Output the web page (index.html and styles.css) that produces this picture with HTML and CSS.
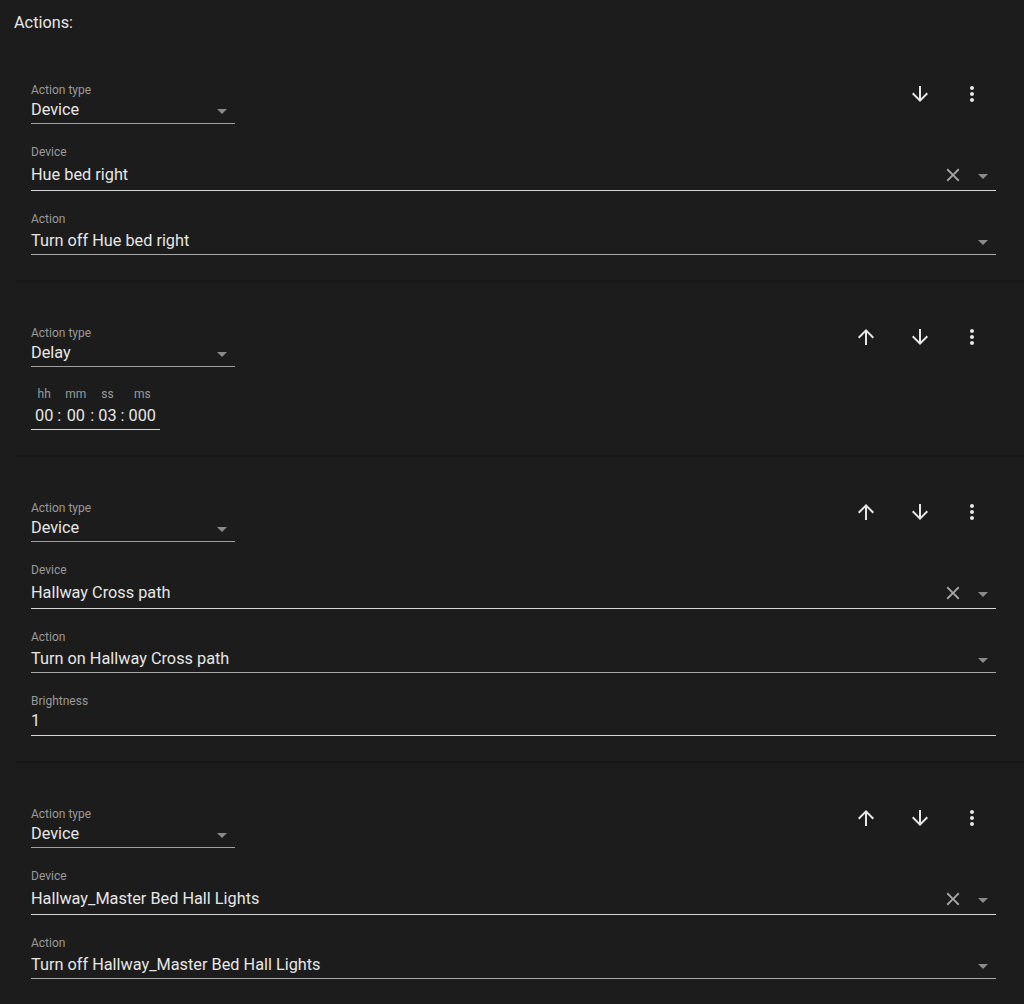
FILE: index.html
```html
<!DOCTYPE html>
<html lang="en">
<head>
    <meta charset="UTF-8">
    <meta name="viewport" content="width=device-width, initial-scale=1.0">
    <title>Automation Actions</title>
    <link rel="stylesheet" href="styles.css">
</head>
<body>
    <div class="title">Actions:</div>

    <!-- action 1 -->
    <div class="card">
        <div class="card-head">
            <div class="field select small">
                <div class="label">Action type</div>
                <div class="value"><span>Device</span><span class="caret"></span></div>
            </div>
            <div class="tools">
                <span class="icon-btn"><svg viewBox="0 0 24 24"><path d="M20 12l-1.41-1.41L13 16.17V4h-2v12.17l-5.58-5.59L4 12l8 8 8-8z"/></svg></span>
                <span class="icon-btn"><svg viewBox="0 0 24 24"><path d="M12 8c1.1 0 2-.9 2-2s-.9-2-2-2-2 .9-2 2 .9 2 2 2zm0 2c-1.1 0-2 .9-2 2s.9 2 2 2 2-.9 2-2-.9-2-2-2zm0 6c-1.1 0-2 .9-2 2s.9 2 2 2 2-.9 2-2-.9-2-2-2z"/></svg></span>
            </div>
        </div>
        <div class="field combo">
            <div class="label">Device</div>
            <div class="value"><span>Hue bed right</span><svg class="clear" viewBox="0 0 24 24"><path d="M19 6.41L17.59 5 12 10.59 6.41 5 5 6.41 10.59 12 5 17.59 6.41 19 12 13.41 17.59 19 19 17.59 13.41 12z"/></svg><span class="caret"></span></div>
        </div>
        <div class="field select wide">
            <div class="label">Action</div>
            <div class="value"><span>Turn off Hue bed right</span><span class="caret"></span></div>
        </div>
    </div>

    <!-- action 2 -->
    <div class="card">
        <div class="card-head">
            <div class="field select small">
                <div class="label">Action type</div>
                <div class="value"><span>Delay</span><span class="caret"></span></div>
            </div>
            <div class="tools">
                <span class="icon-btn up"><svg viewBox="0 0 24 24"><path d="M4 12l1.41 1.41L11 7.83V20h2V7.83l5.58 5.59L20 12l-8-8-8 8z"/></svg></span>
                <span class="icon-btn"><svg viewBox="0 0 24 24"><path d="M20 12l-1.41-1.41L13 16.17V4h-2v12.17l-5.58-5.59L4 12l8 8 8-8z"/></svg></span>
                <span class="icon-btn"><svg viewBox="0 0 24 24"><path d="M12 8c1.1 0 2-.9 2-2s-.9-2-2-2-2 .9-2 2 .9 2 2 2zm0 2c-1.1 0-2 .9-2 2s.9 2 2 2 2-.9 2-2-.9-2-2-2zm0 6c-1.1 0-2 .9-2 2s.9 2 2 2 2-.9 2-2-.9-2-2-2z"/></svg></span>
            </div>
        </div>
        <div class="duration">
            <div class="unit"><div class="label">hh</div><div class="num">00</div></div>
            <div class="sep">:</div>
            <div class="unit"><div class="label">mm</div><div class="num">00</div></div>
            <div class="sep">:</div>
            <div class="unit"><div class="label">ss</div><div class="num">03</div></div>
            <div class="sep">:</div>
            <div class="unit"><div class="label">ms</div><div class="num">000</div></div>
        </div>
    </div>

    <!-- action 3 -->
    <div class="card">
        <div class="card-head">
            <div class="field select small">
                <div class="label">Action type</div>
                <div class="value"><span>Device</span><span class="caret"></span></div>
            </div>
            <div class="tools">
                <span class="icon-btn up"><svg viewBox="0 0 24 24"><path d="M4 12l1.41 1.41L11 7.83V20h2V7.83l5.58 5.59L20 12l-8-8-8 8z"/></svg></span>
                <span class="icon-btn"><svg viewBox="0 0 24 24"><path d="M20 12l-1.41-1.41L13 16.17V4h-2v12.17l-5.58-5.59L4 12l8 8 8-8z"/></svg></span>
                <span class="icon-btn"><svg viewBox="0 0 24 24"><path d="M12 8c1.1 0 2-.9 2-2s-.9-2-2-2-2 .9-2 2 .9 2 2 2zm0 2c-1.1 0-2 .9-2 2s.9 2 2 2 2-.9 2-2-.9-2-2-2zm0 6c-1.1 0-2 .9-2 2s.9 2 2 2 2-.9 2-2-.9-2-2-2z"/></svg></span>
            </div>
        </div>
        <div class="field combo">
            <div class="label">Device</div>
            <div class="value"><span>Hallway Cross path</span><svg class="clear" viewBox="0 0 24 24"><path d="M19 6.41L17.59 5 12 10.59 6.41 5 5 6.41 10.59 12 5 17.59 6.41 19 12 13.41 17.59 19 19 17.59 13.41 12z"/></svg><span class="caret"></span></div>
        </div>
        <div class="field select wide">
            <div class="label">Action</div>
            <div class="value"><span>Turn on Hallway Cross path</span><span class="caret"></span></div>
        </div>
        <div class="field text">
            <div class="label">Brightness</div>
            <div class="value"><span>1</span></div>
        </div>
    </div>

    <!-- action 4 -->
    <div class="card">
        <div class="card-head">
            <div class="field select small">
                <div class="label">Action type</div>
                <div class="value"><span>Device</span><span class="caret"></span></div>
            </div>
            <div class="tools">
                <span class="icon-btn up"><svg viewBox="0 0 24 24"><path d="M4 12l1.41 1.41L11 7.83V20h2V7.83l5.58 5.59L20 12l-8-8-8 8z"/></svg></span>
                <span class="icon-btn"><svg viewBox="0 0 24 24"><path d="M20 12l-1.41-1.41L13 16.17V4h-2v12.17l-5.58-5.59L4 12l8 8 8-8z"/></svg></span>
                <span class="icon-btn"><svg viewBox="0 0 24 24"><path d="M12 8c1.1 0 2-.9 2-2s-.9-2-2-2-2 .9-2 2 .9 2 2 2zm0 2c-1.1 0-2 .9-2 2s.9 2 2 2 2-.9 2-2-.9-2-2-2zm0 6c-1.1 0-2 .9-2 2s.9 2 2 2 2-.9 2-2-.9-2-2-2z"/></svg></span>
            </div>
        </div>
        <div class="field combo">
            <div class="label">Device</div>
            <div class="value"><span>Hallway_Master Bed Hall Lights</span><svg class="clear" viewBox="0 0 24 24"><path d="M19 6.41L17.59 5 12 10.59 6.41 5 5 6.41 10.59 12 5 17.59 6.41 19 12 13.41 17.59 19 19 17.59 13.41 12z"/></svg><span class="caret"></span></div>
        </div>
        <div class="field select wide">
            <div class="label">Action</div>
            <div class="value"><span>Turn off Hallway_Master Bed Hall Lights</span><span class="caret"></span></div>
        </div>
    </div>
</body>
</html>
```

FILE: styles.css
```css
body {
    margin: 0;
    padding: 0;
    background-color: #1c1c1c;
    color: #e6e6e6;
    font-family: Roboto, "Noto Sans", sans-serif;
    overflow: hidden;
}
.title {
    padding: 13px 0 0 14px;
    font-size: 16.3px;
    line-height: 20px;
}
.card {
    margin: 6px 0 0 16px;
    padding: 43px 28px 25px 15px;
    border-bottom: 2px solid #171717;
}
.card + .card {
    margin-top: 0;
}
.card-head {
    display: flex;
    justify-content: space-between;
    align-items: flex-start;
}
.label {
    font-size: 12px;
    line-height: 16px;
    color: #9a9a9a;
}
.field {
    margin-top: 20px;
}
.card-head .field {
    margin-top: 0;
}
.field .value {
    display: flex;
    align-items: center;
    font-size: 16.3px;
    line-height: 22px;
    border-bottom: 1px solid #d6d6d6;
}
.field .value span:first-child {
    flex: 1;
}
.select.small {
    width: 204px;
}
.select.small .value {
    margin-top: 1px;
    padding-bottom: 2px;
    border-bottom-color: #a0a0a0;
}
.select.wide .value {
    margin-top: 3px;
    padding-bottom: 2px;
    border-bottom-color: #a8a8a8;
}
.combo .value {
    margin-top: 4px;
    padding-bottom: 4px;
}
.text .value {
    margin-top: 1px;
    padding-bottom: 3px;
}
.caret {
    width: 0;
    height: 0;
    margin: 2px 8px 0 8px;
    border-left: 5px solid transparent;
    border-right: 5px solid transparent;
    border-top: 5px solid #8a8a8a;
}
.clear {
    width: 22px;
    height: 22px;
    fill: #a6a6a6;
    margin-right: 6px;
}
.tools {
    display: flex;
    gap: 4px;
    margin-top: -12px;
}
.icon-btn {
    width: 48px;
    height: 48px;
    display: flex;
    align-items: center;
    justify-content: center;
}
.icon-btn.up {
    margin-right: 1px;
    justify-content: flex-start;
}
.icon-btn.up svg {
    margin-left: 11px;
}
.icon-btn svg {
    width: 24px;
    height: 24px;
    fill: #e6e6e6;
}
.duration {
    display: inline-flex;
    align-items: flex-end;
    margin-top: 19px;
    padding: 0 4px 2px 4px;
    border-bottom: 1px solid #d6d6d6;
}
.unit {
    display: flex;
    flex-direction: column;
    align-items: center;
}
.unit .label {
    margin-bottom: 3px;
}
.num {
    font-size: 16.3px;
    line-height: 22px;
}
.sep {
    font-size: 16.3px;
    line-height: 22px;
    padding: 0 4px;
}
```
